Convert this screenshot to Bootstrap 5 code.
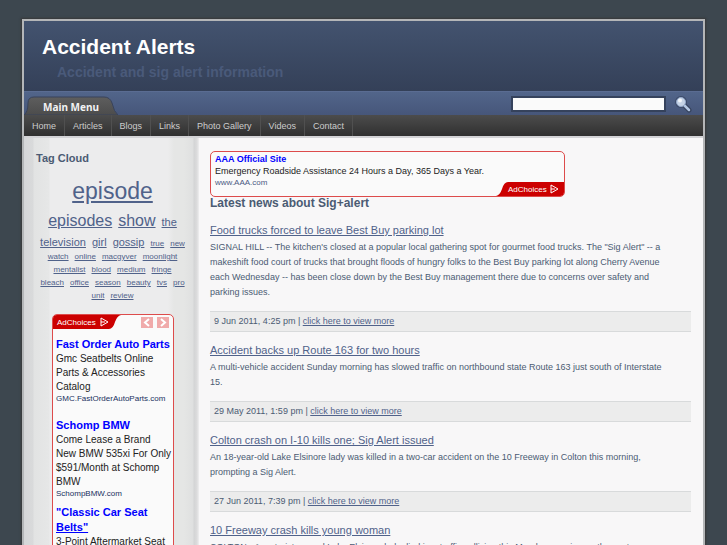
<!DOCTYPE html>
<html lang="en">
<head>
<meta charset="utf-8">
<meta name="viewport" content="width=device-width, initial-scale=1">
<title>Accident Alerts</title>
<link href="https://cdn.jsdelivr.net/npm/bootstrap@5.3.0/dist/css/bootstrap.min.css" rel="stylesheet">
<style>
body{background:#3d474f;font-family:"Liberation Sans",Arial,sans-serif;font-size:10px;line-height:14px;color:#4b5b73}
a{color:#50628a}
.page{margin:19px 22px 0;border:2px solid #b4b6b8;border-bottom:0;background:#f8f7f8;box-shadow:0 0 2px 1px #383838}
.masthead{height:70px;padding:11px 18px;background:linear-gradient(#43536f,#344058)}
.masthead h1{font-size:21px;line-height:30px;font-weight:bold;color:#fff;margin:0}
.masthead p{font-size:14px;line-height:20px;font-weight:bold;color:#4a5a7a;margin:0 0 0 15px}
.searchbar{height:24px;padding-right:11px;background:linear-gradient(#52658a,#46567a);border-top:1px solid #5a6c92}
.menutab{width:94px;height:20px}
.menutab span{left:19px;top:5px;font:bold 10px/14px "Noto Sans","Open Sans",sans-serif;color:#f2f2f2;white-space:nowrap}
.searchbar input{width:155px;height:16px;border:2px solid #35425c;border-radius:0;background:#fafafa;font-size:10px}
.mainnav{height:23px;background:linear-gradient(#4c4c4c,#303030);border-bottom:2px solid #d3d3d6}
.mainnav .nav-link{font-size:9px;line-height:22px;padding:0 8px;color:#ccc;border-right:1px solid #505050}
.sidebar{width:175px;flex:none;padding:12px 10px 0 12px;background:linear-gradient(90deg,#d5d6d8 0,#d9dadb 9px,#e2e3e3 10px,#e6e7e7 25px,#ececed 26px,#ececed 144px,#e5e6e5 150px,#e5e6e5 160px,#dfe0e0 169px,#d3d4d5 170px,#dcdcdd 173px,#efeff0 175px)}
.sidebar h2{font-size:11px;line-height:16px;font-weight:bold;margin:0}
.tags{margin:9px 0 12px}
.tagrow{display:flex;justify-content:center;align-items:baseline;gap:6px;font-size:8px;line-height:13px}
.tagrow-xl{font-size:23px;line-height:32px}
.tagrow-lg{font-size:16px;line-height:28px}
.tagrow-lg .tag-md{font-size:11px}
.tagrow-md{font-size:11px}
.tagrow-md .tag-sm{font-size:8px}
.advert{border:1px solid #dd4b4b;border-radius:5px;background:#fafafa;color:#222}
.advert a{color:#00f;font-weight:bold}
.sidead{width:122px;margin-left:16px}
.sidead section{padding:0 3px 14px;white-space:nowrap}
.sidead section.tight{padding-bottom:6px}
.sidead section a{font-size:11px;line-height:15px}
.sidead section p{line-height:14px;margin:0}
.sidead small,.topad small{font-size:8px;line-height:10px;color:#203060}
.topad small{color:#4b5b83}
.choice{width:68px;height:14px}
.arrows button{width:12px;height:11px;padding:0;border:0;background:#f0aaaa;line-height:0}
.news{padding:13px 12px 0 11px;min-width:0}
.topad{width:355px;height:46px;padding:1px 0 0 4px}
.topad a{font-size:9px;line-height:12px}
.topad p{font-size:9px;line-height:13px;margin:0;color:#222}
.news h2{font-size:12px;line-height:14px;font-weight:bold;margin:-1px 0 12px}
.news h3{font-size:11px;line-height:16px;font-weight:normal;margin:0 0 2px}
.news article p{font-size:9px;line-height:15px;margin:0 0 11px;padding-right:25px}
.stamp{font-size:9px;line-height:19px;padding:0 4px;background:#ececec;border:1px solid #d8dadb;border-width:1px 0;margin-bottom:10px}
</style>
</head>
<body class="vh-100 overflow-hidden">
<div class="page">
<header>
 <div class="masthead"><h1>Accident Alerts</h1><p>Accident and sig alert information</p></div>
 <div class="searchbar d-flex justify-content-between align-items-end">
  <div class="menutab position-relative">
   <svg width="94" height="20" viewBox="0 0 94 20" class="d-block" aria-hidden="true"><defs><linearGradient id="tabfill" x2="0" y2="1"><stop stop-color="#5e5e5e"/><stop offset="1" stop-color="#4c4c4c"/></linearGradient></defs><path d="M0 20Q4 17 4 8Q4 2 10 2H80Q86 2 88 8Q90 17 94 20Z" fill="url(#tabfill)" stroke="#39435a"/></svg>
   <span class="position-absolute">Main Menu</span>
  </div>
  <form class="d-flex align-items-center align-self-center gap-2">
   <input type="text" aria-label="Search">
   <button type="button" class="btn p-0 border-0 d-flex" aria-label="Search"><svg width="18" height="18" viewBox="0 0 18 18"><path d="M9 9L15 15" stroke="#35425c" stroke-width="5" stroke-linecap="round"/><circle cx="7" cy="7" r="6" fill="#3d4b69"/><path d="M10 10L15 15" stroke="#b4c7e3" stroke-width="2.5" stroke-linecap="round"/><circle cx="7" cy="7" r="4.5" fill="#c5d3e6" stroke="#94a9cb"/><circle cx="6" cy="5.500" r="2" fill="#f1f5fa"/></svg></button>
  </form>
 </div>
 <nav class="mainnav d-flex">
  <a class="nav-link" href="#">Home</a><a class="nav-link" href="#">Articles</a><a class="nav-link" href="#">Blogs</a><a class="nav-link" href="#">Links</a><a class="nav-link" href="#">Photo Gallery</a><a class="nav-link" href="#">Videos</a><a class="nav-link" href="#">Contact</a>
 </nav>
</header>
<div class="d-flex">
 <aside class="sidebar">
  <h2>Tag Cloud</h2>
  <div class="tags">
   <div class="tagrow tagrow-xl"><a href="#">episode</a></div>
   <div class="tagrow tagrow-lg"><a href="#">episodes</a> <a href="#">show</a> <a class="tag-md" href="#">the</a></div>
   <div class="tagrow tagrow-md"><a href="#">television</a> <a href="#">girl</a> <a href="#">gossip</a> <a class="tag-sm" href="#">true</a> <a class="tag-sm" href="#">new</a></div>
   <div class="tagrow"><a href="#">watch</a> <a href="#">online</a> <a href="#">macgyver</a> <a href="#">moonlight</a></div>
   <div class="tagrow"><a href="#">mentalist</a> <a href="#">blood</a> <a href="#">medium</a> <a href="#">fringe</a></div>
   <div class="tagrow"><a href="#">bleach</a> <a href="#">office</a> <a href="#">season</a> <a href="#">beauty</a> <a href="#">tvs</a> <a href="#">pro</a></div>
   <div class="tagrow"><a href="#">unit</a> <a href="#">review</a></div>
  </div>
  <div class="advert sidead overflow-hidden">
   <div class="d-flex justify-content-between mb-2">
    <svg class="choice" viewBox="0 0 68 14"><path d="M0 0H68Q64 1 62 7Q60 14 56 14H0Z" fill="#c00"/><text x="4" y="10" font-size="8" fill="#fff">AdChoices</text><path d="M48 3L55 7L48 11ZM48 7H52" fill="none" stroke="#fff"/></svg>
    <div class="arrows d-flex gap-1 pe-1 align-items-center"><button type="button" aria-label="Previous"><svg width="8" height="9"><path d="M6 1L2 4.500L6 8" fill="none" stroke="#fff" stroke-width="2"/></svg></button><button type="button" aria-label="Next"><svg width="8" height="9"><path d="M2 1L6 4.500L2 8" fill="none" stroke="#fff" stroke-width="2"/></svg></button></div>
   </div>
   <section><a class="text-decoration-none d-block" href="#">Fast Order Auto Parts</a><p>Gmc Seatbelts Online<br>Parts &amp; Accessories<br>Catalog</p><small class="d-block">GMC.FastOrderAutoParts.com</small></section>
   <section class="tight"><a class="text-decoration-none d-block" href="#">Schomp BMW</a><p>Come Lease a Brand<br>New BMW 535xi For Only<br>$591/Month at Schomp<br>BMW</p><small class="d-block">SchompBMW.com</small></section>
   <section><a class="text-decoration-none d-block" href="#">"Classic Car Seat<br><u>Belts"</u></a><p>3-Point Aftermarket Seat</p></section>
  </div>
 </aside>
 <main class="news flex-grow-1">
  <div class="advert topad position-relative overflow-hidden"><a class="text-decoration-none d-block" href="#">AAA Official Site</a><p>Emergency Roadside Assistance 24 Hours a Day, 365 Days a Year.</p><small class="d-block">www.AAA.com</small>
   <svg class="choice position-absolute bottom-0 end-0" viewBox="0 0 68 14"><path d="M0 14Q4 13 6 7Q8 0 12 0H68V14Z" fill="#c00"/><text x="12" y="10" font-size="8" fill="#fff">AdChoices</text><path d="M55 3L62 7L55 11ZM55 7H59" fill="none" stroke="#fff"/></svg></div>
  <h2>Latest news about Sig+alert</h2>
  <article><h3><a href="#">Food trucks forced to leave Best Buy parking lot</a></h3><p>SIGNAL HILL -- The kitchen's closed at a popular local gathering spot for gourmet food trucks. The "Sig Alert" -- a makeshift food court of trucks that brought floods of hungry folks to the Best Buy parking lot along Cherry Avenue each Wednesday -- has been close down by the Best Buy management there due to concerns over safety and parking issues.</p><div class="stamp">9 Jun 2011, 4:25 pm | <a href="#">click here to view more</a></div></article>
  <article><h3><a href="#">Accident backs up Route 163 for two hours</a></h3><p>A multi-vehicle accident Sunday morning has slowed traffic on northbound state Route 163 just south of Interstate 15.</p><div class="stamp">29 May 2011, 1:59 pm | <a href="#">click here to view more</a></div></article>
  <article><h3><a href="#">Colton crash on I-10 kills one; Sig Alert issued</a></h3><p>An 18-year-old Lake Elsinore lady was killed in a two-car accident on the 10 Freeway in Colton this morning, prompting a Sig Alert.</p><div class="stamp">27 Jun 2011, 7:39 pm | <a href="#">click here to view more</a></div></article>
  <article><h3><a href="#">10 Freeway crash kills young woman</a></h3><p>COLTON - A motorist around Lake Elsinore lady died in a traffic collision this Monday morning on the east Freeway.</p></article>
 </main>
</div>
</div>
<script src="https://cdn.jsdelivr.net/npm/bootstrap@5.3.0/dist/js/bootstrap.bundle.min.js"></script>
</body>
</html>
